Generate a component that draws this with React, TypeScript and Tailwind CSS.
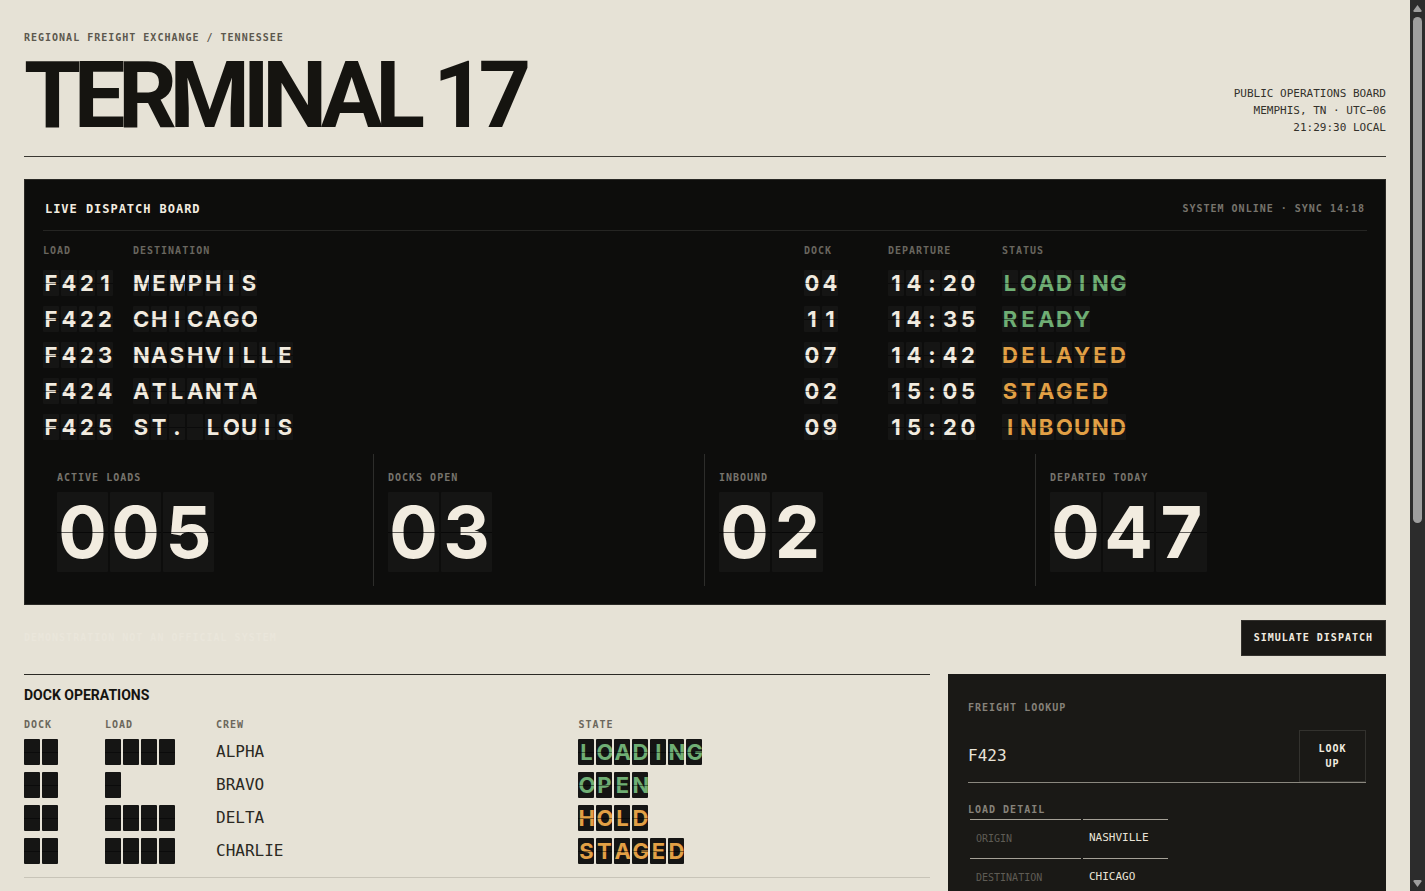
import clsx from "clsx";
import { useState, type FormEvent } from "react";

type Tone = "plain" | "green" | "amber" | "blank";

interface Departure {
  load: string;
  destination: string;
  dock: string;
  time: string;
  status: string;
  tone: Tone;
}

interface DockRow {
  dock: string;
  load: string;
  crew: string;
  state: string;
  tone: Tone;
}

const departures: Departure[] = [
  { load: "F421", destination: "MEMPHIS", dock: "04", time: "14:20", status: "LOADING", tone: "green" },
  { load: "F422", destination: "CHICAGO", dock: "11", time: "14:35", status: "READY", tone: "green" },
  { load: "F423", destination: "NASHVILLE", dock: "07", time: "14:42", status: "DELAYED", tone: "amber" },
  { load: "F424", destination: "ATLANTA", dock: "02", time: "15:05", status: "STAGED", tone: "amber" },
  { load: "F425", destination: "ST. LOUIS", dock: "09", time: "15:20", status: "INBOUND", tone: "amber" },
];

const stats = [
  { label: "ACTIVE LOADS", value: "005" },
  { label: "DOCKS OPEN", value: "03" },
  { label: "INBOUND", value: "02" },
  { label: "DEPARTED TODAY", value: "047" },
];

const docks: DockRow[] = [
  { dock: "  ", load: "    ", crew: "ALPHA", state: "LOADING", tone: "green" },
  { dock: "  ", load: " ", crew: "BRAVO", state: "OPEN", tone: "green" },
  { dock: "  ", load: "    ", crew: "DELTA", state: "HOLD", tone: "amber" },
  { dock: "  ", load: "    ", crew: "CHARLIE", state: "STAGED", tone: "amber" },
];

const detail = [
  ["ORIGIN", "NASHVILLE"],
  ["DESTINATION", "CHICAGO"],
];

const toneColors: Record<Tone, string> = {
  plain: "text-[#f2ece0]",
  green: "text-[#6fae74]",
  amber: "text-[#e2a045]",
  blank: "text-[#151412]",
};

const label = "text-[10px] leading-4 font-bold tracking-[0.1em]";

function Flap({ text, tone = "plain", large = false }: { text: string; tone?: Tone; large?: boolean }) {
  return (
    <span className={clsx("flex gap-0.5 font-['Inter',sans-serif] font-bold", toneColors[tone])}>
      {text.split("").map((char, i) => (
        <span
          key={i}
          className={clsx(
            "relative flex shrink-0 items-center rounded-[1px] bg-[#151514] leading-none [justify-content:safe_center]",
            large ? "h-20 w-[51px] text-[72px]" : "h-[26px] w-4 overflow-hidden text-[22px]"
          )}
        >
          {char}
          <span className={clsx("absolute inset-x-0 top-1/2 h-px", large ? "bg-black/60" : "bg-black/45")} />
        </span>
      ))}
    </span>
  );
}

function Scrollbar() {
  return (
    <div aria-hidden="true" className="flex w-[15px] shrink-0 flex-col items-center bg-[#2c2c2c]">
      <svg viewBox="0 0 15 17" className="h-[17px] w-[15px] shrink-0 fill-[#9f9f9f]">
        <path d="M7.5 5 11.5 10.5 Q12 12 10.5 12 H4.5 Q3 12 3.5 10.5Z" />
      </svg>
      <div className="flex w-full flex-1 flex-col items-center">
        <div className="h-[59%] w-[9px] rounded-full bg-[#9f9f9f]" />
      </div>
      <svg viewBox="0 0 15 17" className="h-[17px] w-[15px] shrink-0 fill-[#9f9f9f]">
        <path d="M7.5 13 11.5 7.5 Q12 6 10.5 6 H4.5 Q3 6 3.5 7.5Z" />
      </svg>
    </div>
  );
}

export default function App() {
  const [query, setQuery] = useState("F423");

  const handleLookup = (e: FormEvent) => {
    e.preventDefault();
    setQuery(query.trim().toUpperCase());
  };

  return (
    <div className="flex h-screen overflow-hidden bg-[#e6e2d6] font-['DejaVu_Sans_Mono',monospace] text-[#151410]">
      <main className="min-w-0 flex-1 overflow-hidden px-6 pt-[30px]">
        {/* Masthead */}
        <header className="flex items-end justify-between border-b border-[#3a3832] pb-5">
          <div>
            <p className={clsx(label, "text-[#5c584e]")}>REGIONAL FREIGHT EXCHANGE / TENNESSEE</p>
            <h1 className="mt-2.5 font-[Roboto,sans-serif] text-[92px] leading-[80px] font-bold tracking-[-0.08em] whitespace-nowrap">
              TERMINAL 17
            </h1>
          </div>
          <p className="text-right text-[11px] leading-[17px] text-[#33312b]">
            PUBLIC OPERATIONS BOARD
            <br />
            MEMPHIS, TN · UTC−06
            <br />
            21:29:30 LOCAL
          </p>
        </header>

        {/* Dispatch board */}
        <section className="mt-[22px] border border-[#2a2926] bg-[#0d0d0c] p-[18px]">
          <div className="flex items-center justify-between border-b border-[#252523] px-0.5 pt-0.5 pb-3">
            <h2 className="text-xs leading-[18px] font-bold tracking-[0.08em] text-[#f2ece0]">
              LIVE DISPATCH BOARD
            </h2>
            <p className={clsx(label, "text-[#77746d]")}>SYSTEM ONLINE · SYNC 14:18</p>
          </div>

          <table className="w-full table-fixed border-collapse text-left">
            <colgroup>
              <col className="w-[90px]" />
              <col />
              <col className="w-[84px]" />
              <col className="w-[114px]" />
              <col className="w-[365px]" />
            </colgroup>
            <thead>
              <tr className={clsx(label, "h-[34px] text-[#69665f]")}>
                <th className="pt-1.5">LOAD</th>
                <th className="pt-1.5">DESTINATION</th>
                <th className="pt-1.5">DOCK</th>
                <th className="pt-1.5">DEPARTURE</th>
                <th className="pt-1.5">STATUS</th>
              </tr>
            </thead>
            <tbody>
              {departures.map((d) => (
                <tr key={d.load} className="h-9">
                  <td><Flap text={d.load} /></td>
                  <td><Flap text={d.destination} /></td>
                  <td><Flap text={d.dock} /></td>
                  <td><Flap text={d.time} /></td>
                  <td><Flap text={d.status} tone={d.tone} /></td>
                </tr>
              ))}
            </tbody>
          </table>

          <div className="mt-[9px] grid grid-cols-4 divide-x divide-[#2d2d2b]">
            {stats.map((s) => (
              <div key={s.label} className="px-3.5 pt-4 pb-3.5">
                <p className={clsx(label, "mb-1.5 text-[#77746d]")}>{s.label}</p>
                <Flap text={s.value} large />
              </div>
            ))}
          </div>
        </section>

        <div className="mt-[15px] mb-[18px] flex items-center justify-between">
          <p className={clsx(label, "text-[#eae6db]")}>DEMONSTRATION NOT AN OFFICIAL SYSTEM</p>
          <button
            type="button"
            className={clsx(label, "h-9 border border-[#33312d] bg-[#191815] px-3 text-[#f2ece0]")}
          >
            SIMULATE DISPATCH
          </button>
        </div>

        <div className="grid grid-cols-[906fr_438fr] gap-[18px]">
          {/* Docks */}
          <section className="border-t border-[#2b2a25]">
            <h2 className="mt-2.5 font-[Roboto,sans-serif] text-sm leading-5 font-bold">DOCK OPERATIONS</h2>
            <div className="border-b border-[#c8c4b8] pb-2.5">
              <table className="w-full table-fixed border-collapse text-left">
                <colgroup>
                  <col className="w-[81px]" />
                  <col className="w-[111px]" />
                  <col className="w-[40%]" />
                  <col />
                </colgroup>
                <thead>
                  <tr className={clsx(label, "h-[30px] text-[#6b675c]")}>
                    <th className="pt-2.5">DOCK</th>
                    <th className="pt-2.5">LOAD</th>
                    <th className="pt-2.5">CREW</th>
                    <th className="pt-2.5">STATE</th>
                  </tr>
                </thead>
                <tbody>
                  {docks.map((row) => (
                    <tr key={row.crew} className="h-[33px]">
                      <td><Flap text={row.dock} tone="blank" /></td>
                      <td><Flap text={row.load} tone="blank" /></td>
                      <td className="text-base leading-6 text-[#2b2923]">{row.crew}</td>
                      <td><Flap text={row.state} tone={row.tone} /></td>
                    </tr>
                  ))}
                </tbody>
              </table>
            </div>
          </section>

          {/* Lookup */}
          <section className="bg-[#1a1916] px-5 pt-[26px] pb-10 text-[#e9e4d8]">
            <form onSubmit={handleLookup}>
              <label htmlFor="lookup" className={clsx(label, "block text-[#86827a]")}>
                FREIGHT LOOKUP
              </label>
              <div className="mt-3.5 flex border-b border-[#8b887f]">
                <input
                  id="lookup"
                  value={query}
                  onChange={(e) => setQuery(e.target.value)}
                  className="min-w-0 flex-1 bg-transparent text-base outline-none"
                />
                <button
                  type="submit"
                  className="w-[67px] border border-[#33322e] px-4 py-2.5 text-[10px] leading-[15px] font-bold tracking-[0.1em] text-[#f2ece0]"
                >
                  LOOK UP
                </button>
              </div>
            </form>
            <h3 className={clsx(label, "mt-[19px] text-[#86827a]")}>LOAD DETAIL</h3>
            <table className="border-separate border-spacing-x-0.5 border-spacing-y-px text-left">
              <tbody>
                {detail.map(([name, value]) => (
                  <tr key={name} className="h-[38px]">
                    <th
                      scope="row"
                      className="w-[111px] border-t border-[#a5a197] px-1.5 text-[10px] font-normal text-[#5f5c55]"
                    >
                      {name}
                    </th>
                    <td className="w-[85px] border-t border-[#a5a197] px-1.5 text-[11px]">{value}</td>
                  </tr>
                ))}
              </tbody>
            </table>
          </section>
        </div>
      </main>
      <Scrollbar />
    </div>
  );
}
